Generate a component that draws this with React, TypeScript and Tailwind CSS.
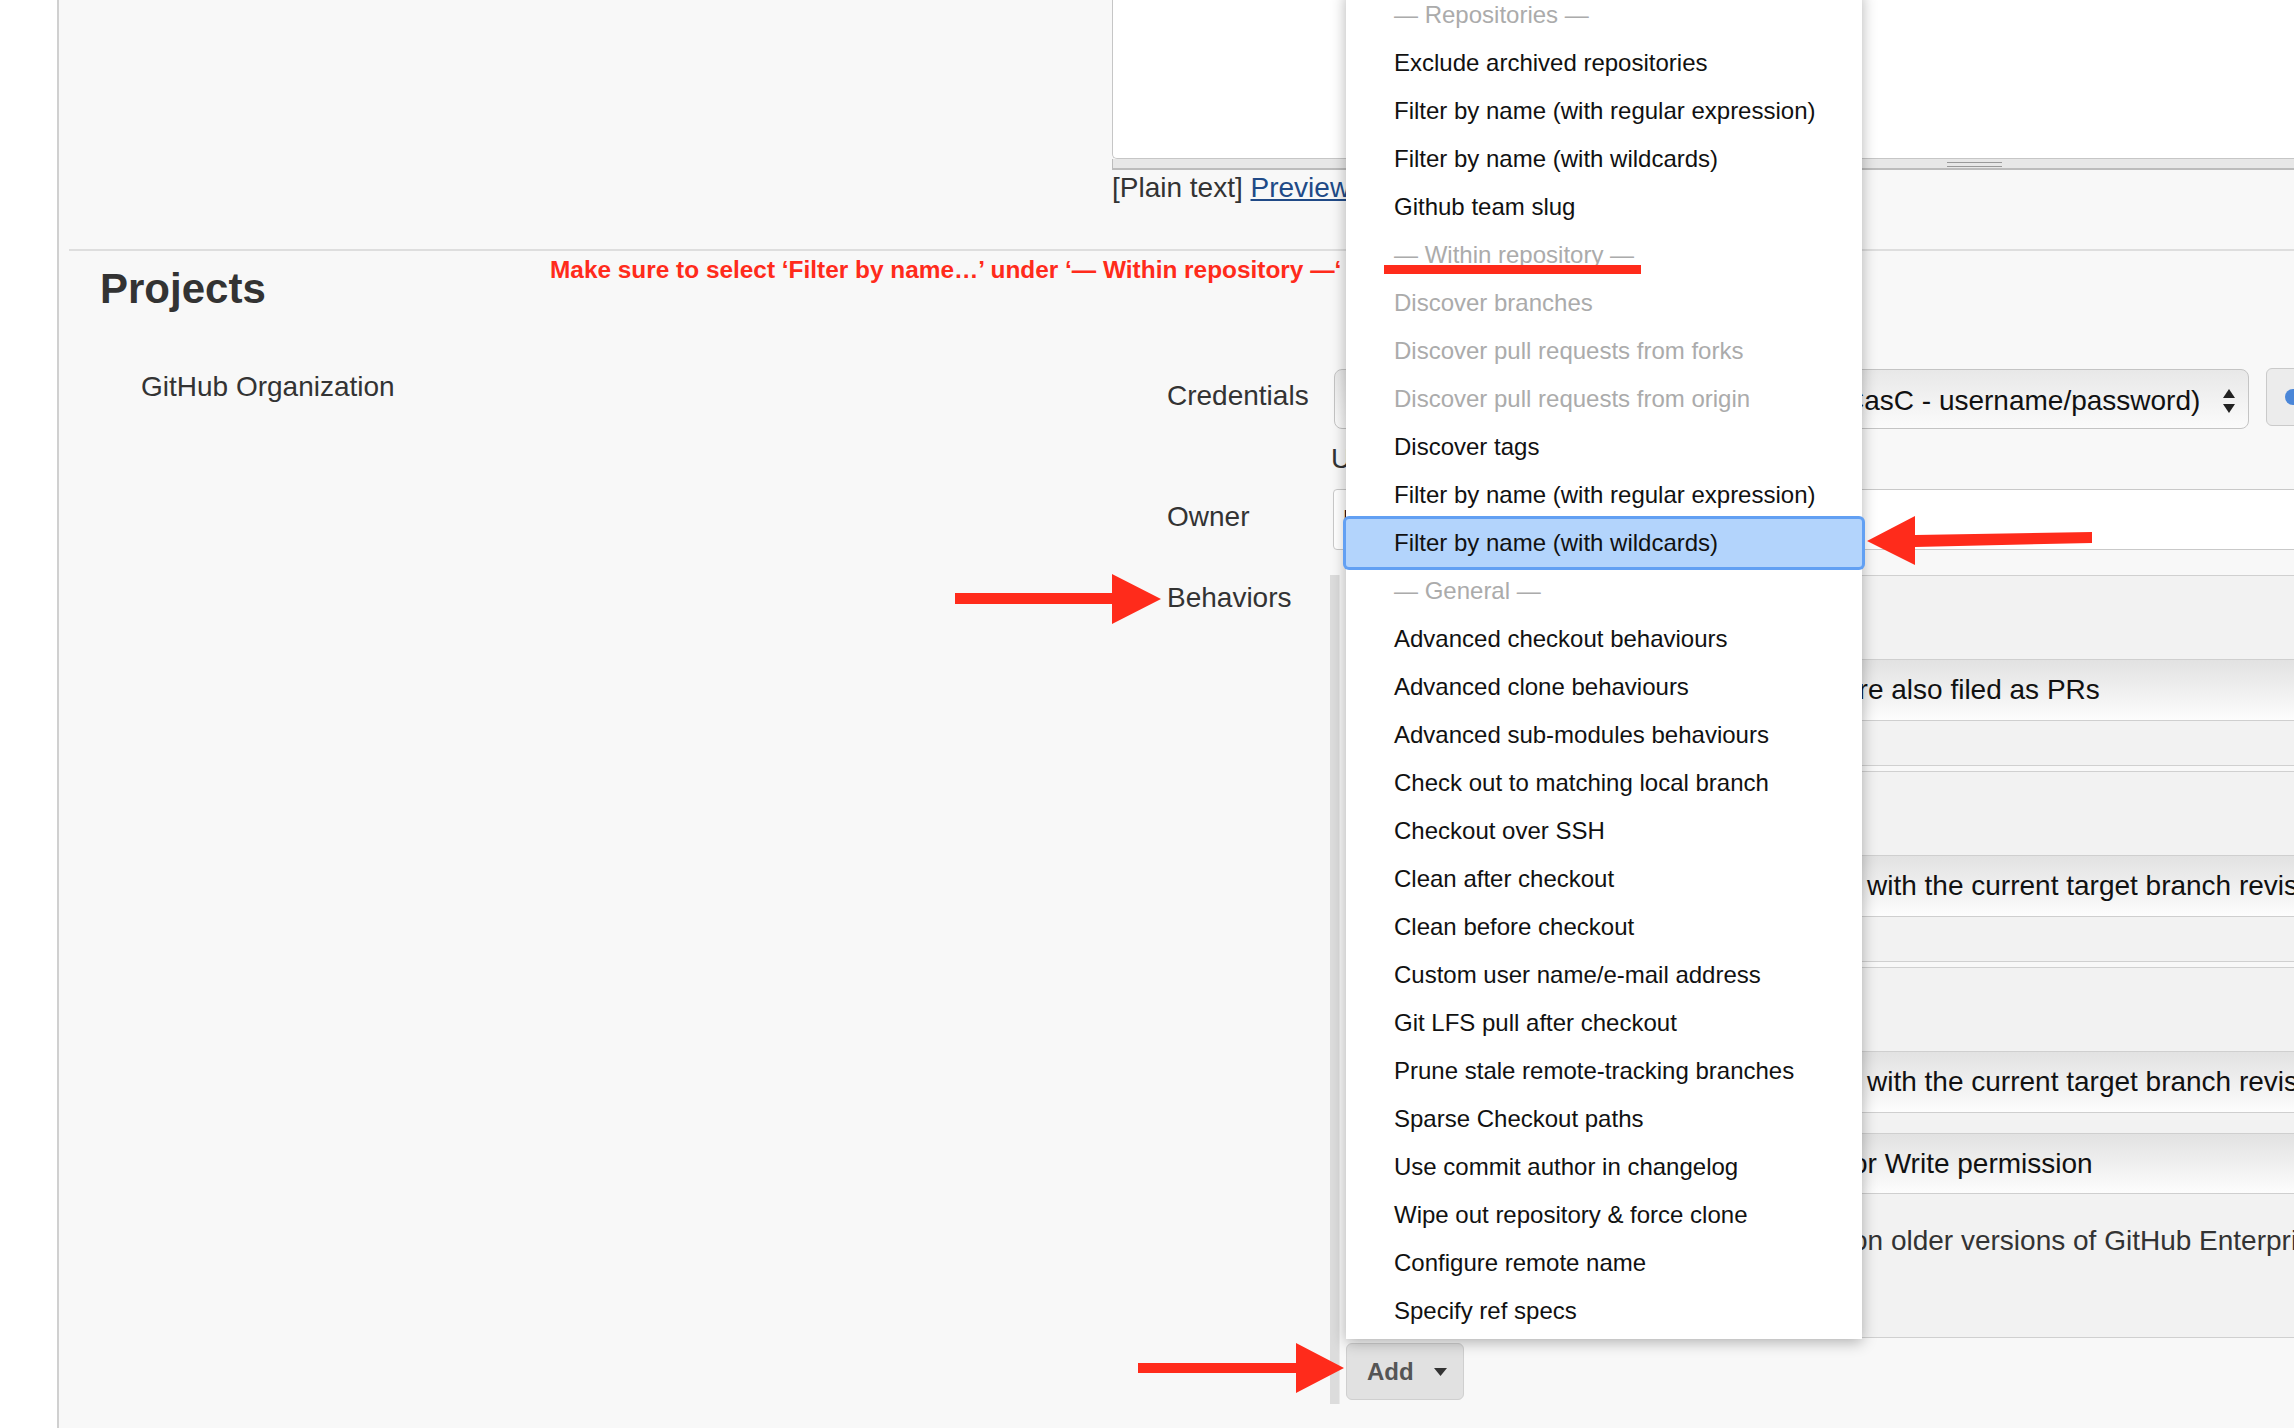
import React from "react";

type Kind = "header" | "disabled" | "normal" | "selected";

const menuItems: { label: string; kind: Kind }[] = [
  { label: "— Repositories —", kind: "header" },
  { label: "Exclude archived repositories", kind: "normal" },
  { label: "Filter by name (with regular expression)", kind: "normal" },
  { label: "Filter by name (with wildcards)", kind: "normal" },
  { label: "Github team slug", kind: "normal" },
  { label: "— Within repository —", kind: "header" },
  { label: "Discover branches", kind: "disabled" },
  { label: "Discover pull requests from forks", kind: "disabled" },
  { label: "Discover pull requests from origin", kind: "disabled" },
  { label: "Discover tags", kind: "normal" },
  { label: "Filter by name (with regular expression)", kind: "normal" },
  { label: "Filter by name (with wildcards)", kind: "selected" },
  { label: "— General —", kind: "header" },
  { label: "Advanced checkout behaviours", kind: "normal" },
  { label: "Advanced clone behaviours", kind: "normal" },
  { label: "Advanced sub-modules behaviours", kind: "normal" },
  { label: "Check out to matching local branch", kind: "normal" },
  { label: "Checkout over SSH", kind: "normal" },
  { label: "Clean after checkout", kind: "normal" },
  { label: "Clean before checkout", kind: "normal" },
  { label: "Custom user name/e-mail address", kind: "normal" },
  { label: "Git LFS pull after checkout", kind: "normal" },
  { label: "Prune stale remote-tracking branches", kind: "normal" },
  { label: "Sparse Checkout paths", kind: "normal" },
  { label: "Use commit author in changelog", kind: "normal" },
  { label: "Wipe out repository & force clone", kind: "normal" },
  { label: "Configure remote name", kind: "normal" },
  { label: "Specify ref specs", kind: "normal" },
];

function SelectBar({ text, pad, height }: { text: string; pad: string; height: string }) {
  return (
    <div className={`${height} ${pad} border-y border-[#cfcfcf] bg-linear-to-b from-[#e2e2e2] via-[#efefef] to-[#fdfdfd] flex items-center whitespace-nowrap text-[28px] leading-[32px] text-[#111]`}>
      {text}
    </div>
  );
}

function BehaviorMenu() {
  return (
    <div className="absolute left-[1346px] top-[-9px] w-[516px] h-[1348px] bg-white shadow-[0_3px_14px_rgba(0,0,0,0.3)] pb-[4px] z-20">
      {menuItems.map((item, i) => (
        <div
          key={i}
          className={
            item.kind === "selected"
              ? "h-[48px] leading-[48px] pl-[48px] text-[24px] text-[#111] whitespace-nowrap bg-[#b3d4fc] ring-[3px] ring-[#62a0f3] rounded-[3px] relative"
              : item.kind === "normal"
              ? "h-[48px] leading-[48px] pl-[48px] text-[24px] text-[#111] whitespace-nowrap"
              : "h-[48px] leading-[48px] pl-[48px] text-[24px] text-[#ababab] whitespace-nowrap"
          }
        >
          {item.label}
        </div>
      ))}
    </div>
  );
}

export default function App() {
  return (
    <div className="w-[2294px] h-[1428px] relative overflow-hidden flex bg-[#f8f8f8] font-['Liberation_Sans',Arial,Helvetica,sans-serif]">
      <div className="w-[59px] shrink-0 bg-white border-r-2 border-[#d0d0d0]" />

      <div className="flex-1 min-w-0 flex flex-col">
        {/* description textarea */}
        <div className="pl-[1053px]">
          <div className="h-[159px] w-[1250px] bg-white border-l border-b border-[#c6c6c6] rounded-bl-[5px]" />
          <div className="h-[11px] w-[1250px] bg-[#e7e7e7] border-l border-b-2 border-[#bcbcbc] pl-[834px] pt-[3px] flex flex-col gap-[3px]">
            <div className="w-[55px] h-px bg-[#999]" />
            <div className="w-[55px] h-px bg-[#999]" />
          </div>
          <div className="mt-[2px] text-[28px] leading-[32px] text-[#333] whitespace-nowrap">
            [Plain text] <span className="text-[#204a87] underline">Preview</span>
          </div>
        </div>

        <div className="mt-[45px] ml-[10px] h-[2px] bg-[#dedede]" />

        <h1 className="mt-[14px] pl-[41px] text-[42px] leading-[48px] font-bold text-[#333]">Projects</h1>

        {/* form rows */}
        <div className="mt-[56px] flex flex-col text-[#333]">
          <div className="flex">
            <div className="w-[1108px] shrink-0 pl-[82px] pt-[2px] text-[28px] leading-[32px]">GitHub Organization</div>
            <div className="w-[163px] shrink-0 pt-[11px] text-[28px] leading-[32px]">Credentials</div>
            <div className="flex-1 min-w-0 flex items-start gap-[17px] pl-[4px]">
              <div className="w-[915px] shrink-0 h-[60px] rounded-[8px] border border-[#c4c4c4] bg-linear-to-b from-[#e8e8e8] to-[#fbfbfb] flex items-center pl-[509px] pr-[12px] pt-[3px] text-[28px] leading-[32px] text-[#111] whitespace-nowrap">
                <span>CasC - username/password)</span>
                <svg className="ml-auto" width="14" height="26" viewBox="0 0 14 26">
                  <path d="M1 10 L7 1 L13 10 Z" fill="#222" />
                  <path d="M1 16 L7 25 L13 16 Z" fill="#222" />
                </svg>
              </div>
              <div className="w-[80px] shrink-0 h-[58px] -mt-px rounded-[6px] border border-[#cacaca] bg-[#ececec] flex items-center pl-[18px]">
                <div className="w-[16px] h-[16px] rounded-full bg-[#4a86d8]" />
              </div>
            </div>
          </div>

          <div className="flex mt-[14px]">
            <div className="w-[1271px] shrink-0" />
            <div className="flex-1 pl-[1px] text-[28px] leading-[32px] text-[#333] whitespace-nowrap">User</div>
          </div>

          <div className="flex mt-[14px]">
            <div className="w-[1108px] shrink-0" />
            <div className="w-[163px] shrink-0 pt-[12px] text-[28px] leading-[32px]">Owner</div>
            <div className="flex-1 min-w-0 pl-[3px]">
              <div className="w-[1000px] h-[61px] bg-white border border-[#c9c9c9] rounded-l-[4px] flex items-center pl-[9px] pt-[3px] text-[28px] text-[#111]">
                lucas
              </div>
            </div>
          </div>

          <div className="flex mt-[25px]">
            <div className="w-[1108px] shrink-0" />
            <div className="w-[163px] shrink-0 pt-[7px] text-[28px] leading-[32px]">Behaviors</div>
            <div className="flex-1 min-w-0 flex">
              <div className="w-[10px] shrink-0 bg-[#dcdcdc] border-r border-[#e9e9e9]" />
              <div className="flex-1 min-w-0 pl-[6px] pb-[4px] flex flex-col">
                <div className="border-y border-[#d0d0d0] bg-[#f2f2f2]">
                  <div className="h-[83px]" />
                  <SelectBar text="are also filed as PRs" pad="pl-[497px]" height="h-[62px]" />
                  <div className="h-[44px]" />
                </div>
                <div className="mt-[5px] border-y border-[#d0d0d0] bg-[#f2f2f2]">
                  <div className="h-[83px]" />
                  <SelectBar text="with the current target branch revision" pad="pl-[521px]" height="h-[62px]" />
                  <div className="h-[44px]" />
                </div>
                <div className="mt-[5px] border-y border-[#d0d0d0] bg-[#f2f2f2]">
                  <div className="h-[83px]" />
                  <SelectBar text="with the current target branch revision" pad="pl-[521px]" height="h-[62px]" />
                  <div className="h-[20px]" />
                  <SelectBar text="or Write permission" pad="pl-[506px]" height="h-[61px]" />
                  <div className="h-[143px] pl-[506px] pt-[31px] text-[28px] leading-[32px] text-[#333] whitespace-nowrap">
                    on older versions of GitHub Enterprise
                  </div>
                </div>
                <div className="mt-[5px]">
                  <button className="w-[118px] h-[57px] rounded-[6px] border border-[#cfcfcf] bg-[#e1e1e1] flex items-center pl-[20px] gap-[20px]">
                    <span className="text-[24px] leading-[28px] font-bold text-[#555]">Add</span>
                    <svg width="13" height="8" viewBox="0 0 13 8">
                      <path d="M0 0 L13 0 L6.5 8 Z" fill="#333" />
                    </svg>
                  </button>
                </div>
              </div>
            </div>
          </div>
        </div>
      </div>

      {/* annotation text */}
      <div className="absolute left-[550px] top-[256px] text-[24.4px] leading-[28px] font-bold text-[#ff2b1b] whitespace-nowrap z-10">
        Make sure to select ‘Filter by name…’ under ‘— Within repository —‘
      </div>

      <BehaviorMenu />

      {/* red annotation marks */}
      <div className="absolute left-[1384px] top-[265px] w-[257px] h-[9px] bg-[#ff2b1b] z-30" />

      <svg className="absolute left-[950px] top-[570px] z-30" width="215" height="58" viewBox="950 570 215 58">
        <polygon points="955,593 1112,593 1112,574 1161,599 1112,624 1112,604 955,604" fill="#ff2b1b" />
      </svg>

      <svg className="absolute left-[1862px] top-[512px] z-30" width="235" height="58" viewBox="1862 512 235 58">
        <polygon points="1867,541 1915,516 1915,535 2092,532 2092,543 1915,547 1915,565" fill="#ff2b1b" />
      </svg>

      <svg className="absolute left-[1134px] top-[1340px] z-30" width="214" height="58" viewBox="1134 1340 214 58">
        <polygon points="1138,1363 1296,1363 1296,1343 1344,1368 1296,1393 1296,1373 1138,1373" fill="#ff2b1b" />
      </svg>
    </div>
  );
}
